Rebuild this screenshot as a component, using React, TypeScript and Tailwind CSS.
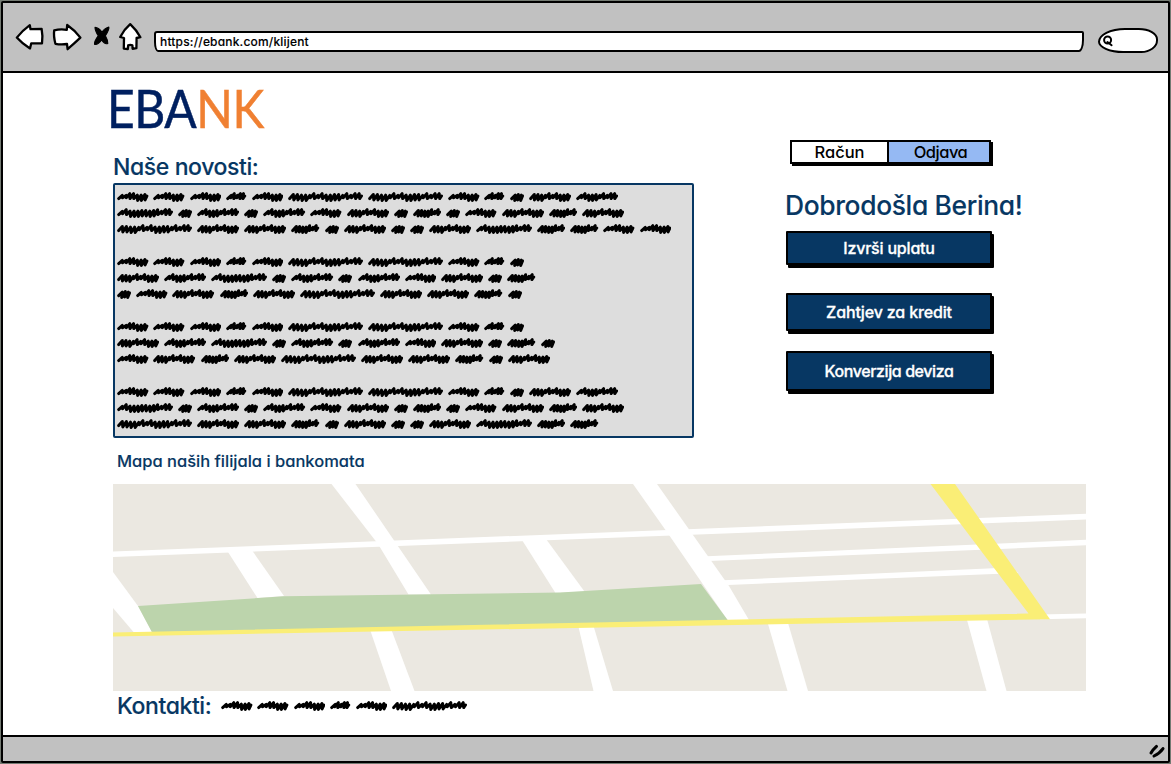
import React from "react";

const ink = "text-[#073763] [-webkit-text-stroke:0.12px_#073763]";

type Word = "A" | "B" | "C" | "D" | "E" | "F" | "G" | "H";

const wordWidths: Record<Word, number> = { A: 31.6, B: 20.4, C: 75.2, D: 14.2, E: 42.3, F: 42.3, G: 56.2, H: 28.4 };

const wordPaths: Record<Word, string> = { A: "", B: "", C: "", D: "", E: "", F: "", G: "", H: "" };

// Each letter is one slanted loop; the digit selects how high or low the loop sits.
const loops: Record<Word, string> = {
  A: "0011332",
  B: "01011",
  C: "22330101332201011",
  D: "323",
  E: "2230101332",
  F: "0133201011",
  G: "0133322321011",
  H: "2233101",
};

(Object.keys(wordWidths) as Word[]).forEach((w) => {
  const seq = loops[w];
  const step = (wordWidths[w] - 5.2) / seq.length;
  let d = "M1.7 7.6";
  seq.split("").forEach((c, i) => {
    const x = 1.7 + i * step;
    const top = [4.4, 2.7, 3.5, 4.2][Number(c)];
    const bottom = [6.8, 7.6, 8.9, 9.5][Number(c)];
    d += ` L${(x + 3.6).toFixed(1)} ${top} L${(x + step).toFixed(1)} ${bottom}`;
  });
  d += ` L${(wordWidths[w] - 1.7).toFixed(1)} 5`;
  wordPaths[w] = d;
});

function Scribble({ words }: { words: string }) {
  return (
    <div className="flex h-[12px] items-center gap-[4.85px]">
      {words.split("").map((w, i) => (
        <svg key={i} width={wordWidths[w as Word]} height="12" className="shrink-0" fill="none" stroke="#000" strokeWidth="3" strokeLinecap="round" strokeLinejoin="round">
          <path d={wordPaths[w as Word]} />
        </svg>
      ))}
    </div>
  );
}

const news = [
  ["AAABACCABDEF", "GDFDFAEDHDAEHE", "CEEHDEDDEGHHAA"],
  ["AAABACCABD", "EFGDFDFAEDH", "DAEHECEEHD"],
  ["AAABACCABD", "EFGDFDFAEDHD", "AEHECEEHDE"],
  ["AAABACCABDEF", "GDFDFAEDHDAEHE", "CEEHDEDDEGHH"],
];

function NavIcons() {
  return (
    <svg width="132" height="32" viewBox="12 20 132 32" className="shrink-0" fill="#fff" stroke="#000" strokeWidth="2.3" strokeLinejoin="round" strokeLinecap="round">
      <path d="M16.8 37.6 Q22 31 29.8 25.2 L30.5 29.2 L41.6 28.8 Q43 36 42 43.4 L31.2 43.4 L30 48.4 Q22 43.6 16.8 37.6 Z" />
      <path d="M54.2 30.4 Q60 28.8 66.8 29.8 L67.2 25 Q75 30.4 80.4 37.6 Q74 43.6 67.6 49.2 L67 44 Q61 44.8 55.4 43.8 Q53.4 36 54.2 30.4 Z" />
      <path d="M130.2 24.2 Q124 29.6 120.2 37 L124 38 L123.8 48.6 L127.8 49 L128.2 45.4 Q130.2 44.4 132.4 45.4 L132.6 48.8 L136.4 48.2 L136.6 38 L140.4 37.2 Q136.4 30 130.2 24.2 Z" />
      <path d="M95 27.4 Q99 27.6 102 32.4 Q104 28.6 108.8 27 Q109.8 28.6 105.4 35.8 Q107.8 40 107.8 43.4 Q105 45 101.6 40 Q98.4 44.8 94.6 44.4 Q94 41.4 98.2 35.8 Q95 30.4 95 27.4 Z" fill="#000" strokeWidth="1.1" />
    </svg>
  );
}

function ActionButton({ label, className }: { label: string; className: string }) {
  return (
    <button
      className={`ml-px block w-[206px] rounded-[1px] border-2 border-black bg-[#073763] text-center text-[16px] leading-none font-medium text-white shadow-[2px_3px_0_0_#000] [-webkit-text-stroke:0.3px_#fff] ${className}`}
    >
      {label}
    </button>
  );
}

function BranchMap() {
  return (
    <svg width="973" height="207" viewBox="113 484 973 207" className="block shrink-0">
      <rect x="113" y="484" width="973" height="207" fill="#ebe8e1" />
      <g fill="#fff">
        <path d="M113 551.5 L1086 513.8 V519.5 L113 557 Z" />
        <path d="M331.5 484 H355.5 L431 594.5 H408.5 L378 544 Z" />
        <path d="M633 484 H657 L729 586 L749 620 H727.5 L669 535 Z" />
        <path d="M228 552 L252.5 551 L284 596 L257.5 598 Z" />
        <path d="M522 540 L546 539 L584.5 591.5 L555.5 593 Z" />
        <path d="M113 572 L138 606 L152 632 H133.5 L113 608 Z" />
        <path d="M707 556.2 L1086 539.8 V545.3 L709 561 Z" />
        <path d="M723 580.2 L1010 567.6 L1018.5 573 L728 585 Z" />
        <path d="M1040 614.6 L1086 613.4 V618.3 L1040 619.3 Z" />
        <path d="M370.5 631 L391.5 630 L414.5 691 H391 Z" />
        <path d="M578.5 627 L593.5 626 L613 691 H593.5 Z" />
        <path d="M768 624 L788 623 L808 691 H787.5 Z" />
        <path d="M967 620 L987 619 L1006.5 691 H986.5 Z" />
      </g>
      <path d="M138 606 L284 596.3 L560 592.5 L701 584 L728 620.5 L152 632.3 Z" fill="#bcd4ac" />
      <path d="M113 632.4 L1028.5 613.6 L930.5 484 H955 L1050 619.2 L113 636.4 Z" fill="#faee76" />
    </svg>
  );
}

export default function App() {
  return (
    <div className="flex h-[764px] w-[1171px] flex-col bg-[#747b73] p-px font-['Inter','Liberation_Sans',sans-serif] [font-feature-settings:'cv11']">
      <div className="flex min-h-0 flex-1 flex-col overflow-hidden rounded-[2px] border-[2.4px] border-black bg-white">
        <header className="flex h-[70px] shrink-0 items-start border-b-[2.5px] border-black bg-[#c1c1c1] pt-[17px] pl-[9px]">
          <NavIcons />
          <div className="mt-[11px] ml-[10px] flex h-[21px] w-[930px] items-center rounded-[3px_2px_5px_4px/3px_2px_12px_10px] border-[2.4px] border-black bg-white pl-[4px] text-[12px] font-medium tracking-[0.18px] text-black [-webkit-text-stroke:0.1px_#000]">
            https://ebank.com/klijent
          </div>
          <div className="mt-[8px] ml-[14px] flex h-[25px] w-[60px] items-center rounded-[45%_32%_28%_42%/55%_45%_50%_45%] border-[2.4px] border-black bg-white pl-[2px]">
            <svg width="12" height="13" fill="none" stroke="#000" strokeWidth="2" strokeLinecap="round">
              <circle cx="5.6" cy="6" r="3.5" />
              <path d="M5.4 8 L9.6 11.2" />
            </svg>
          </div>
        </header>

        <main className="flex min-h-0 flex-1 flex-col pl-[110px]">
          <div className="flex h-[378px] shrink-0">
            <section className="w-[672px] shrink-0">
              <h1 className="-ml-[6px] mt-[8px] h-[54px] w-fit origin-left scale-x-[0.905] font-['Lato',sans-serif] text-[53px] leading-[54px] tracking-[-0.5px] text-[#002060] [-webkit-text-stroke:0.5px_#002060] [font-feature-settings:normal]">
                EBA<span className="text-[#f08032] [-webkit-text-stroke:0.5px_#f08032]">NK</span>
              </h1>
              <h2 className={`mt-[17px] h-[31px] text-[23px] leading-[30px] font-medium tracking-[-0.4px] ${ink}`}>Naše novosti:</h2>
              <div className="flex h-[255px] w-[581px] flex-col gap-[20.9px] rounded-[2px] border-[2.5px] border-[#073763] bg-[#dddddd] pt-[6px] pl-[2px]">
                {news.map((paragraph, i) => (
                  <div key={i} className="flex flex-col gap-[4px]">
                    {paragraph.map((line, j) => (
                      <Scribble key={j} words={line} />
                    ))}
                  </div>
                ))}
              </div>
            </section>
            <aside className="pt-[67px]">
              <div className="ml-[5px] flex h-[24px] w-[201px] border-2 border-black text-[16.5px] leading-[21px] font-medium text-black shadow-[2px_2px_0_0_#000]">
                <button className="w-[97px] border-r-2 border-black bg-white">Račun</button>
                <button className="flex-1 bg-[#95b9f3] pl-[3px] tracking-[-0.5px]">Odjava</button>
              </div>
              <h2 className={`mt-[23px] h-[36px] whitespace-nowrap text-[26.4px] leading-[36px] font-medium tracking-[-0.35px] ${ink}`}>Dobrodošla Berina!</h2>
              <ActionButton label="Izvrši uplatu" className="mt-[8px] h-[34px] tracking-[-0.2px]" />
              <ActionButton label="Zahtjev za kredit" className="mt-[28px] h-[38px] tracking-[-0.15px]" />
              <ActionButton label="Konverzija deviza" className="mt-[20px] h-[40px] tracking-[-0.4px]" />
            </aside>
          </div>
          <h3 className={`ml-[4px] h-[33px] shrink-0 text-[16.5px] leading-[20px] font-medium ${ink}`}>Mapa naših filijala i bankomata</h3>
          <BranchMap />
          <div className="ml-[4px] flex h-[30px] items-center">
            <h2 className={`w-[104px] text-[23px] font-medium tracking-[-0.4px] ${ink}`}>Kontakti:</h2>
            <Scribble words="AAABAC" />
          </div>
        </main>

        <footer className="flex h-[26px] shrink-0 items-center justify-end border-t-[2.5px] border-black bg-[#c1c1c1] pr-[2px]">
          <svg width="18" height="16" className="mt-[3px]" fill="none" stroke="#000" strokeWidth="3" strokeLinecap="round">
            <path d="M3 10 Q4.5 7 8.5 3.4 M6 13 Q12 10 15 5.6" />
          </svg>
        </footer>
      </div>
    </div>
  );
}
